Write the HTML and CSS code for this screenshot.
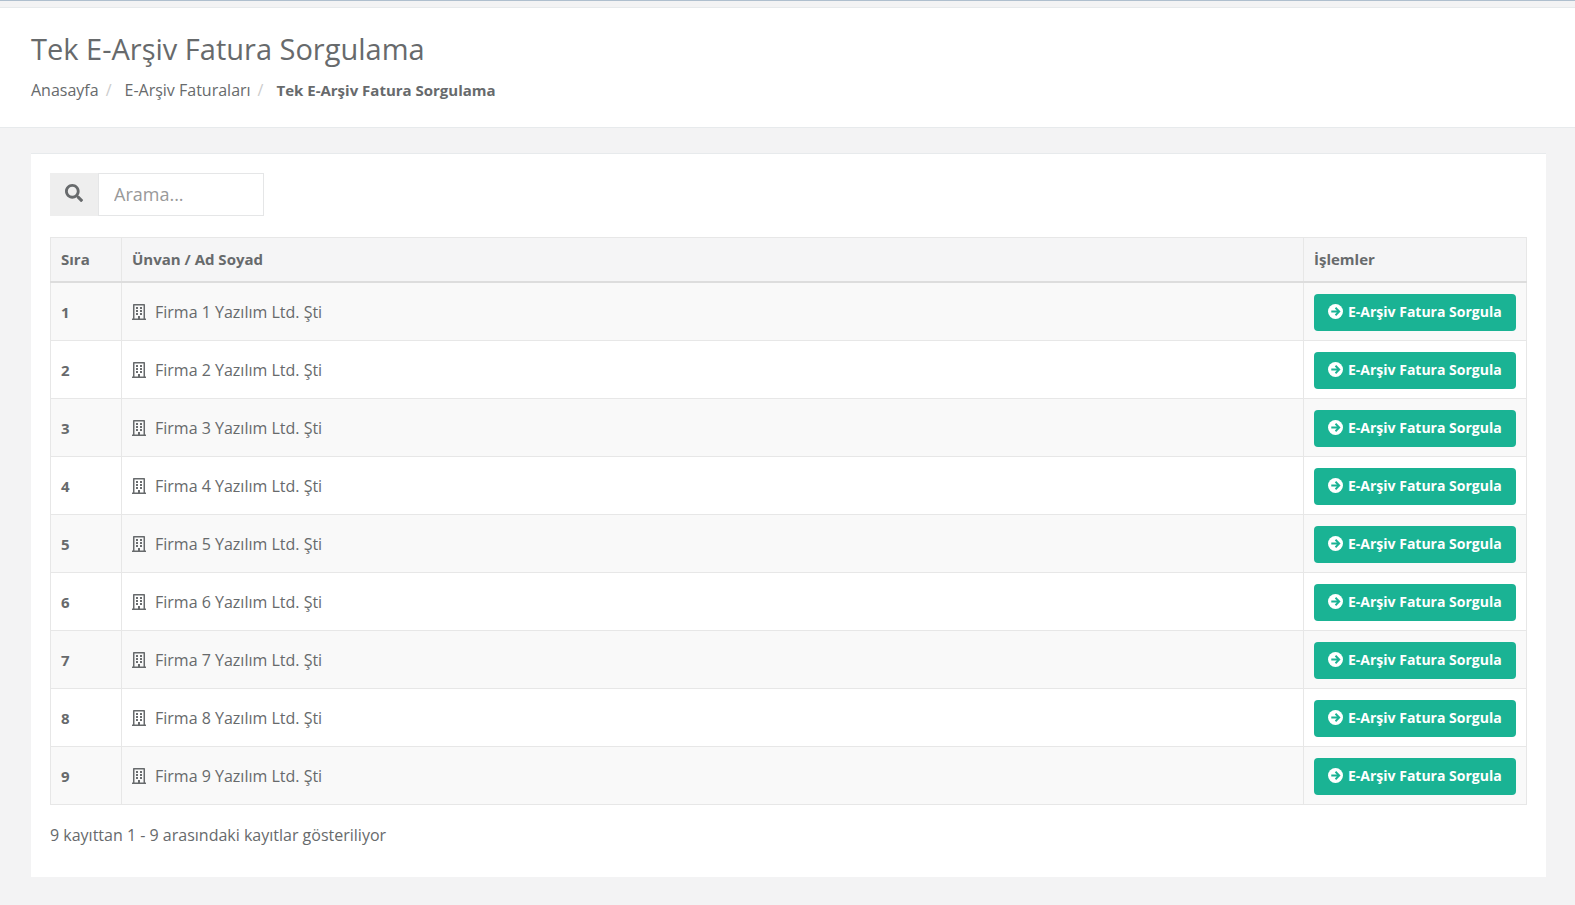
FILE: index.html
```html
<!DOCTYPE html>
<html lang="tr">
<head>
  <meta charset="UTF-8">
  <meta name="viewport" content="width=device-width, initial-scale=1.0">
  <title>Tek E-Arşiv Fatura Sorgulama</title>
  <link rel="stylesheet" href="styles.css">
</head>
<body>
  <svg class="icon-defs" aria-hidden="true">
    <symbol id="icon-search" viewBox="0 0 512 512">
      <path d="M505 442.700L405.300 343c-4.500-4.500-10.600-7-17-7H372c27.600-35.300 44-79.700 44-128C416 93.100 322.900 0 208 0S0 93.100 0 208s93.100 208 208 208c48.300 0 92.700-16.400 128-44v16.300c0 6.400 2.500 12.500 7 17l99.700 99.700c9.400 9.400 24.600 9.400 33.900 0l28.300-28.300c9.400-9.400 9.400-24.600.1-34zM208 336c-70.700 0-128-57.200-128-128 0-70.700 57.200-128 128-128 70.700 0 128 57.200 128 128 0 70.700-57.200 128-128 128z"/>
    </symbol>
    <symbol id="icon-building" viewBox="0 0 448 512">
      <path d="M128 148v-40c0-6.600 5.400-12 12-12h40c6.600 0 12 5.400 12 12v40c0 6.600-5.400 12-12 12h-40c-6.600 0-12-5.400-12-12zm140 12h40c6.600 0 12-5.400 12-12v-40c0-6.600-5.400-12-12-12h-40c-6.600 0-12 5.400-12 12v40c0 6.600 5.400 12 12 12zm-128 96h40c6.600 0 12-5.400 12-12v-40c0-6.600-5.400-12-12-12h-40c-6.600 0-12 5.400-12 12v40c0 6.600 5.400 12 12 12zm128 0h40c6.600 0 12-5.400 12-12v-40c0-6.600-5.400-12-12-12h-40c-6.600 0-12 5.400-12 12v40c0 6.600 5.400 12 12 12zm-76 84v-40c0-6.600-5.400-12-12-12h-40c-6.600 0-12 5.400-12 12v40c0 6.600 5.400 12 12 12h40c6.600 0 12-5.400 12-12zm76 12h40c6.600 0 12-5.400 12-12v-40c0-6.600-5.400-12-12-12h-40c-6.600 0-12 5.400-12 12v40c0 6.600 5.400 12 12 12zm180 124v36H0v-36c0-6.600 5.400-12 12-12h19.500V24c0-13.300 10.700-24 24-24h337c13.300 0 24 10.700 24 24v440H436c6.600 0 12 5.400 12 12zM79.500 463H192v-67c0-6.600 5.400-12 12-12h40c6.600 0 12 5.400 12 12v67h112.500V49L80 48z"/>
    </symbol>
    <symbol id="icon-arrow" viewBox="0 0 16 16">
      <circle cx="8" cy="8" r="8"/>
      <path class="arrow-line" d="M3.500 8h8.500M8 4l4 4-4 4"/>
    </symbol>
  </svg>

  <div class="top-line"></div>

  <header class="page-heading">
    <h1>Tek E-Arşiv Fatura Sorgulama</h1>
    <ol class="breadcrumb">
      <li><a href="#">Anasayfa</a></li>
      <li><a href="#">E-Arşiv Faturaları</a></li>
      <li class="active"><strong>Tek E-Arşiv Fatura Sorgulama</strong></li>
    </ol>
  </header>

  <main class="ibox">
    <div class="search-group">
      <label class="search-addon" for="search" aria-label="Arama"><svg class="icon-search"><use href="#icon-search"/></svg></label>
      <input type="text" id="search" class="search-input" placeholder="Arama...">
    </div>

    <table>
      <thead>
        <tr>
          <th class="col-num">Sıra</th>
          <th>Ünvan / Ad Soyad</th>
          <th class="col-action">İşlemler</th>
        </tr>
      </thead>
      <tbody>
        <tr>
          <td class="col-num">1</td>
          <td><div class="company"><svg class="icon-building"><use href="#icon-building"/></svg>Firma 1 Yazılım Ltd. Şti</div></td>
          <td class="col-action"><button type="button" class="btn"><svg class="icon-arrow"><use href="#icon-arrow"/></svg>E-Arşiv Fatura Sorgula</button></td>
        </tr>
        <tr>
          <td class="col-num">2</td>
          <td><div class="company"><svg class="icon-building"><use href="#icon-building"/></svg>Firma 2 Yazılım Ltd. Şti</div></td>
          <td class="col-action"><button type="button" class="btn"><svg class="icon-arrow"><use href="#icon-arrow"/></svg>E-Arşiv Fatura Sorgula</button></td>
        </tr>
        <tr>
          <td class="col-num">3</td>
          <td><div class="company"><svg class="icon-building"><use href="#icon-building"/></svg>Firma 3 Yazılım Ltd. Şti</div></td>
          <td class="col-action"><button type="button" class="btn"><svg class="icon-arrow"><use href="#icon-arrow"/></svg>E-Arşiv Fatura Sorgula</button></td>
        </tr>
        <tr>
          <td class="col-num">4</td>
          <td><div class="company"><svg class="icon-building"><use href="#icon-building"/></svg>Firma 4 Yazılım Ltd. Şti</div></td>
          <td class="col-action"><button type="button" class="btn"><svg class="icon-arrow"><use href="#icon-arrow"/></svg>E-Arşiv Fatura Sorgula</button></td>
        </tr>
        <tr>
          <td class="col-num">5</td>
          <td><div class="company"><svg class="icon-building"><use href="#icon-building"/></svg>Firma 5 Yazılım Ltd. Şti</div></td>
          <td class="col-action"><button type="button" class="btn"><svg class="icon-arrow"><use href="#icon-arrow"/></svg>E-Arşiv Fatura Sorgula</button></td>
        </tr>
        <tr>
          <td class="col-num">6</td>
          <td><div class="company"><svg class="icon-building"><use href="#icon-building"/></svg>Firma 6 Yazılım Ltd. Şti</div></td>
          <td class="col-action"><button type="button" class="btn"><svg class="icon-arrow"><use href="#icon-arrow"/></svg>E-Arşiv Fatura Sorgula</button></td>
        </tr>
        <tr>
          <td class="col-num">7</td>
          <td><div class="company"><svg class="icon-building"><use href="#icon-building"/></svg>Firma 7 Yazılım Ltd. Şti</div></td>
          <td class="col-action"><button type="button" class="btn"><svg class="icon-arrow"><use href="#icon-arrow"/></svg>E-Arşiv Fatura Sorgula</button></td>
        </tr>
        <tr>
          <td class="col-num">8</td>
          <td><div class="company"><svg class="icon-building"><use href="#icon-building"/></svg>Firma 8 Yazılım Ltd. Şti</div></td>
          <td class="col-action"><button type="button" class="btn"><svg class="icon-arrow"><use href="#icon-arrow"/></svg>E-Arşiv Fatura Sorgula</button></td>
        </tr>
        <tr>
          <td class="col-num">9</td>
          <td><div class="company"><svg class="icon-building"><use href="#icon-building"/></svg>Firma 9 Yazılım Ltd. Şti</div></td>
          <td class="col-action"><button type="button" class="btn"><svg class="icon-arrow"><use href="#icon-arrow"/></svg>E-Arşiv Fatura Sorgula</button></td>
        </tr>
      </tbody>
    </table>

    <p class="table-info">9 kayıttan 1 - 9 arasındaki kayıtlar gösteriliyor</p>
  </main>
</body>
</html>
```
FILE: styles.css
```css
* {
  box-sizing: border-box;
}

body {
  margin: 0;
  font-family: "Trebuchet MS", "Open Sans", "Noto Sans", sans-serif;
  font-size: 16px;
  line-height: 24px;
  color: #676a6c;
  background: #f3f3f4;
}

svg {
  fill: currentColor;
  flex: none;
}

.icon-defs {
  display: none;
}

.top-line {
  height: 7px;
  border-top: 1px solid #afbfce;
}

/* Page heading */
.page-heading {
  padding: 23px 31px 25px;
  background: #fff;
  border-top: 1px solid #e7eaec;
  border-bottom: 1px solid #e7eaec;
}

h1 {
  margin: 0 0 12px;
  font-size: 29px;
  font-weight: 400;
  line-height: 35px;
}

.breadcrumb {
  display: flex;
  margin: 0;
  padding: 0;
  list-style: none;
}

.breadcrumb a {
  color: inherit;
  text-decoration: none;
}

.breadcrumb li + li::before {
  content: "/";
  padding: 0 13px 0 7px;
  color: #ccc;
}

.breadcrumb strong {
  font-size: 15px;
}

/* Content box */
.ibox {
  margin: 25px 29px 28px 31px;
  padding: 19px 19px 30px;
  background: #fff;
  border-top: 1px solid #e7eaec;
}

.search-group {
  display: flex;
  width: 214px;
  height: 43px;
  margin-bottom: 21px;
}

.search-addon {
  display: flex;
  align-items: center;
  justify-content: center;
  width: 48px;
  padding-bottom: 3px;
  background: #eee;
}

.icon-search {
  width: 18px;
  height: 18px;
}

.search-input {
  flex: 1;
  min-width: 0;
  padding: 0 15px 2px;
  border: 1px solid #e5e6e7;
  font-family: inherit;
  font-size: 18px;
  color: inherit;
}

.search-input::placeholder {
  color: #999;
}

/* Table */
table {
  width: 100%;
  border-collapse: collapse;
}

th,
td {
  padding: 10px;
  text-align: left;
  border: 1px solid #e7e7e7;
}

th {
  padding-top: 9px;
  background: #f5f5f6;
  font-size: 15px;
  font-weight: 700;
  border-bottom: 2px solid #ddd;
}

tbody tr:nth-child(odd) {
  background: #f9f9f9;
}

.col-num {
  width: 71px;
  font-size: 15px;
  font-weight: 700;
}

.col-action {
  width: 223px;
}

td.col-action {
  padding: 11px 10px 9px;
}

.company {
  display: flex;
  align-items: center;
  gap: 9px;
}

.icon-building {
  width: 14px;
  height: 16px;
}

.btn {
  display: flex;
  align-items: center;
  gap: 5px;
  width: 100%;
  height: 37px;
  padding: 0 14px 2px;
  border: 0;
  border-radius: 4px;
  background: #1ab394;
  color: #fff;
  font-family: inherit;
  font-size: 14px;
  font-weight: 700;
  white-space: nowrap;
  cursor: pointer;
}

.btn:hover {
  background: #18a689;
}

.icon-arrow {
  width: 15px;
  height: 15px;
}

.arrow-line {
  fill: none;
  stroke: #1ab394;
  stroke-width: 2;
}

.table-info {
  margin: 18px 0 0;
}
```
